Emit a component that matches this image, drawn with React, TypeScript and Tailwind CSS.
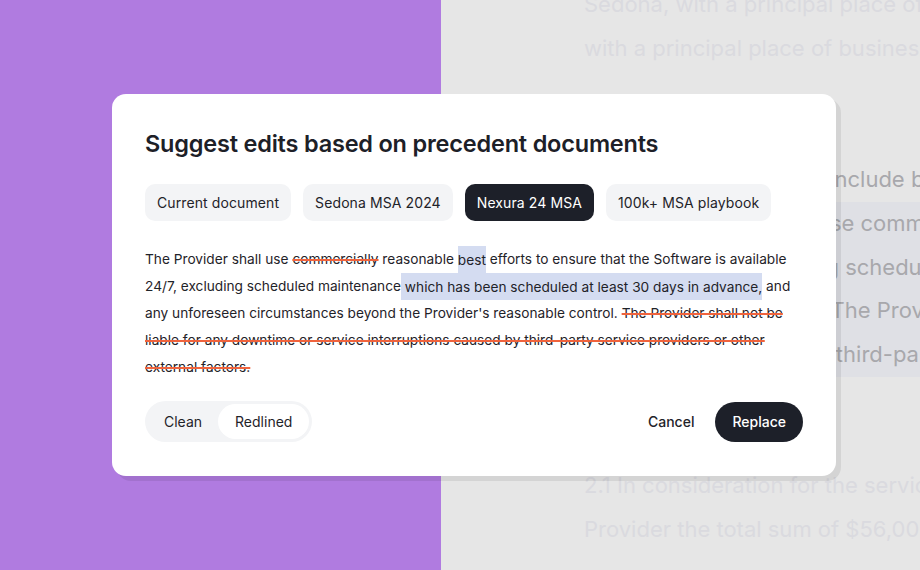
import React from 'react'

const SOURCES = ['Current document', 'Sedona MSA 2024', 'Nexura 24 MSA', '100k+ MSA playbook']

type DocLine = { text: string; tone: 'faint' | 'dark' | 'marked' | 'blank' }

const DOC_LINES: DocLine[] = [
  { text: 'Sedona, with a principal place of business at', tone: 'faint' },
  { text: 'with a principal place of business at 120 Main', tone: 'faint' },
  { text: '', tone: 'blank' },
  { text: '', tone: 'blank' },
  { text: 'The Services shall also include business support', tone: 'dark' },
  { text: 'The Provider seeks to use commercially reasonable', tone: 'marked' },
  { text: 'available 24/7, excluding scheduled maintenance', tone: 'marked' },
  { text: 'The Provider\u2019s control.\u00a0 The Provider shall not be', tone: 'marked' },
  { text: 'interruptions caused by third-party service', tone: 'marked' },
  { text: '', tone: 'blank' },
  { text: '', tone: 'blank' },
  { text: '2.1 In consideration for the services, the Client', tone: 'faint' },
  { text: 'Provider the total sum of $56,000 payable in', tone: 'faint' },
]

const TONE: Record<DocLine['tone'], string> = {
  faint: 'text-[#dadadf]',
  dark: 'text-[#a8a8ac]',
  marked: 'text-[#a8a8ac] bg-[#dfe0e5]',
  blank: '',
}

function Struck({ children }: { children: React.ReactNode }) {
  return (
    <span className="line-through decoration-[#f0633d] decoration-2">{children}</span>
  )
}

// inline highlight padded out to the full 27px line box
function Mark({ children }: { children: React.ReactNode }) {
  return <span className="bg-[#d4dcf1] py-[5.5px] box-decoration-clone">{children}</span>
}

export default function App() {
  return (
    <div className="relative flex h-[570px] w-[920px] overflow-hidden font-['Inter',sans-serif]">
      <div className="w-[441px] shrink-0 bg-[#b07be0]" />
      <div className="flex-1 bg-[#e6e6e6]">
        <div className="-mt-[17px] flex flex-col text-[22px] leading-[43.75px] whitespace-nowrap">
          {DOC_LINES.map((l, i) => (
            <div key={i} className={`h-[43.75px] pl-[143px] ${TONE[l.tone]}`}>
              {l.text}
            </div>
          ))}
        </div>
      </div>

      <div className="absolute left-[112px] top-[94px] w-[724px] rounded-[14px] bg-white px-[33px] pt-[34px] pb-[34px] shadow-[5px_5px_0_rgba(0,0,0,0.08)]">
        <h2 className="text-[23.5px] font-semibold leading-8 tracking-[-0.2px] text-[#1d2027]">
          Suggest edits based on precedent documents
        </h2>

        <div className="mt-[24px] flex gap-3">
          {SOURCES.map((s) => {
            const active = s === 'Nexura 24 MSA'
            return (
              <div
                key={s}
                className={`flex h-[37px] items-center rounded-[10px] px-3 text-[14px] tracking-[0.1px] ${
                  active ? 'bg-[#1d2029] text-white' : 'bg-[#f3f4f6] text-[#1f2329]'
                }`}
              >
                {s}
              </div>
            )
          })}
        </div>

        <p className="mt-[25px] text-[13.7px] leading-[27px] text-[#1f2329]">
          The Provider shall use <Struck>commercially</Struck> reasonable <Mark>best</Mark> efforts
          to ensure that the Software is available 24/7, excluding scheduled maintenance
          <Mark> which has been scheduled at least 30 days in advance,</Mark> and any unforeseen
          circumstances beyond the Provider's reasonable control.{' '}
          <Struck>
            The Provider shall not be liable for any downtime or service interruptions caused by
            third-party service providers or other external factors.
          </Struck>
        </p>

        <div className="mt-[20px] flex items-center justify-between">
          <div className="flex h-[41px] items-center rounded-full bg-[#f3f4f6] p-[3px] text-[14px] text-[#1f2329]">
            <div className="px-[16px]">Clean</div>
            <div className="flex h-full items-center rounded-full bg-white px-[17px]">Redlined</div>
          </div>
          <div className="flex items-center gap-[21px] text-[14px] font-medium">
            <button className="text-[#1f2329]">Cancel</button>
            <button className="h-[40px] rounded-full bg-[#1d2029] px-[17px] text-white">Replace</button>
          </div>
        </div>
      </div>
    </div>
  )
}
